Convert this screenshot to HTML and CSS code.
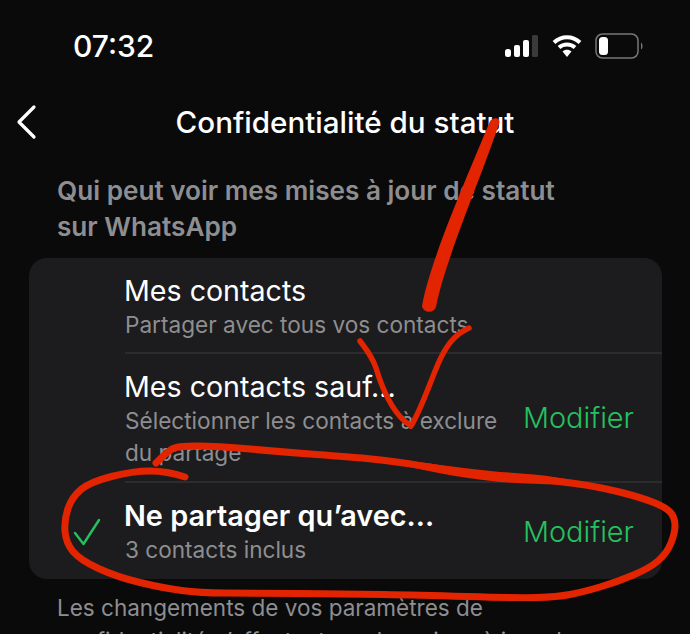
FILE: index.html
```html
<!DOCTYPE html>
<html lang="fr">
<head>
    <meta charset="UTF-8">
    <meta name="viewport" content="width=device-width, initial-scale=1.0">
    <title>Confidentialité du statut</title>
    <link rel="stylesheet" href="styles.css">
</head>
<body>
    <div class="screen">
        <div class="status-bar">
            <span class="time">07:32</span>
            <div class="status-icons">
                <svg class="signal" width="35" height="24" viewBox="0 0 35 24">
                    <rect x="1" y="15" width="6" height="8" rx="2.500" fill="#fff"/>
                    <rect x="10" y="11" width="6" height="12" rx="2" fill="#fff"/>
                    <rect x="19" y="6" width="6" height="17" rx="2" fill="#fff"/>
                    <rect x="28" y="1" width="6" height="22" rx="1.500" fill="#3a3a3c"/>
                </svg>
                <svg class="wifi" width="30" height="24" viewBox="0 0 30 24">
                    <path d="M2 8.500C9.500 1.500 20.500 1.500 28 8.500M7 13.500C11.500 9.500 18.500 9.500 23 13.500" fill="none" stroke="#fff" stroke-width="4"/>
                    <path d="M10.500 17.500C13 15.200 17 15.200 19.500 17.500L15 23Z" fill="#fff"/>
                </svg>
                <svg class="battery" width="49" height="26" viewBox="0 0 49 26">
                    <rect x="1" y="1" width="42" height="24" rx="6.500" fill="none" stroke="#77777a" stroke-width="1.500"/>
                    <rect x="4" y="4" width="9" height="18" rx="3.500" fill="#fff"/>
                    <path d="M46 9.500C48 10.500 48 15.500 46 16.500Z" fill="#77777a"/>
                </svg>
            </div>
        </div>

        <div class="nav-bar">
            <svg class="back" width="24" height="36" viewBox="0 0 24 36">
                <path d="M20 3L5 18L20 33" fill="none" stroke="#fff" stroke-width="3.200" stroke-linecap="round" stroke-linejoin="round"/>
            </svg>
            <h1>Confidentialité du statut</h1>
        </div>

        <h2 class="section-title">Qui peut voir mes mises à jour de statut sur WhatsApp</h2>

        <div class="card">
            <div class="row row-first">
                <div class="row-check"></div>
                <div class="row-body">
                    <div class="row-text">
                        <div class="row-title">Mes contacts</div>
                        <div class="row-sub">Partager avec tous vos contacts</div>
                    </div>
                </div>
            </div>
            <div class="row row-second">
                <div class="row-check"></div>
                <div class="row-body">
                    <div class="row-text">
                        <div class="row-title">Mes contacts sauf...</div>
                        <div class="row-sub">Sélectionner les contacts à exclure du partage</div>
                    </div>
                    <span class="row-action">Modifier</span>
                </div>
            </div>
            <div class="row row-third">
                <div class="row-check">
                    <svg width="30" height="30" viewBox="0 0 30 30">
                        <path d="M3 15L11.500 26L27 2" fill="none" stroke="#25c15f" stroke-width="2.400" stroke-linecap="round" stroke-linejoin="round"/>
                    </svg>
                </div>
                <div class="row-body">
                    <div class="row-text">
                        <div class="row-title selected">Ne partager qu’avec...</div>
                        <div class="row-sub">3 contacts inclus</div>
                    </div>
                    <span class="row-action">Modifier</span>
                </div>
            </div>
        </div>

        <p class="footnote">Les changements de vos paramètres de confidentialité n’affectent pas les mises à jour de statut que vous avez déjà envoyées.</p>

        <!-- annotations au feutre rouge -->
        <svg class="scribble" width="690" height="634" viewBox="0 0 690 634">
            <path d="M490 121C495 116 501 118 499 124C484 170 445 260 436 307C434 314 423 313 422 306C430 260 470 170 490 121Z" fill="#e32400"/>
            <path d="M360 341C366 349 372 356 376 368C382 388 392 414 411 426C420 412 428 388 438 364C445 348 453 335 469 328" fill="none" stroke="#e32400" stroke-width="5.500" stroke-linecap="round" stroke-linejoin="round"/>
            <path d="M185 477Q167 471 150 471Q133 471 111.500 476.500Q90 482 81 489.500Q72 497 68 508.500Q64 520 65 531.500Q66 543 73 551.500Q80 560 98.500 568.500Q117 577 140 582.500Q163 588 181.500 590.500Q200 593 225 593Q250 593 300 593.500Q350 594 383.500 594.500Q417 595 467 596.500Q517 598 537 597.500Q557 597 570 594.500Q583 592 600 587Q617 582 633.500 575Q650 568 658.500 560.500Q667 553 671 543Q675 533 675 525.500Q675 518 671 513Q667 508 655 503Q643 498 621.500 492.500Q600 487 575 483.500Q550 480 525 478.500Q500 477 483.500 475Q467 473 442 469Q417 465 400 462.500Q383 460 366.500 458.500Q350 457 316.500 454.500Q283 452 250 449Q217 446 197 446Q177 446 172 449Q167 452 156 463" fill="none" stroke="#e32400" stroke-width="7" stroke-linecap="round" stroke-linejoin="round"/>
            <path d="M380 457C420 462 460 468 500 472C540 474 570 478 600 487C570 484 540 485 500 482C460 478 420 470 380 460Z" fill="#e32400"/>
        </svg>
    </div>
</body>
</html>
```

FILE: styles.css
```css
* {
    box-sizing: border-box;
}
html, body {
    margin: 0;
    height: 634px;
    overflow: hidden;
    background-color: #0a0a0b;
}
body {
    font-family: Inter, "Liberation Sans", sans-serif;
    color: #fff;
}
.screen {
    position: relative;
    height: 634px;
    overflow: hidden;
}
.status-bar {
    height: 92px;
    padding: 29px 46px 0 73px;
    display: flex;
    justify-content: space-between;
    align-items: flex-start;
}
.time {
    font-size: 30px;
    line-height: 34px;
    font-weight: 500;
}
.status-icons {
    display: flex;
    align-items: center;
    gap: 13px;
    height: 34px;
}
.nav-bar {
    position: relative;
    height: 60px;
    display: flex;
    align-items: center;
    justify-content: center;
}
.back {
    position: absolute;
    left: 14px;
    top: 12px;
}
h1 {
    margin: 0;
    font-size: 29.600px;
    font-weight: 500;
}
.section-title {
    margin: 21px 100px 0 57px;
    font-size: 26.150px;
    line-height: 36px;
    font-weight: 600;
    color: #8e8e90;
}
.card {
    margin: 13px 28px 0 29px;
    height: 321px;
    background-color: #1c1c1e;
    border-radius: 18px;
    display: flex;
    flex-direction: column;
}
.row {
    display: flex;
    align-items: stretch;
}
.row-first {
    height: 96px;
}
.row-second {
    height: 129px;
}
.row-third {
    height: 96px;
}
.row-check {
    width: 96px;
    padding: 35px 0 0 43px;
}
.row-body {
    flex: 1;
    display: flex;
    align-items: center;
    justify-content: space-between;
    padding-right: 28px;
    border-bottom: 2px solid #2c2c2e;
}
.row-third .row-body {
    border-bottom: none;
}
.row-text {
    width: 385px;
}
.row-first .row-text {
    padding-top: 4px;
}
.row-second .row-text {
    padding-top: 2px;
}
.row-title {
    margin-left: -1px;
    font-size: 28.600px;
    line-height: 36px;
}
.row-title.selected {
    font-size: 28.800px;
    font-weight: 600;
    line-height: 37px;
}
.row-sub {
    font-size: 22.600px;
    line-height: 32px;
    color: #8e8e90;
}
.row-action {
    font-size: 28.900px;
    font-weight: 300;
    color: #25c15f;
}
.footnote {
    margin: 12px 90px 0 57px;
    font-size: 22.500px;
    line-height: 33px;
    color: #8e8e90;
}
.scribble {
    position: absolute;
    left: 0;
    top: 0;
}
```
